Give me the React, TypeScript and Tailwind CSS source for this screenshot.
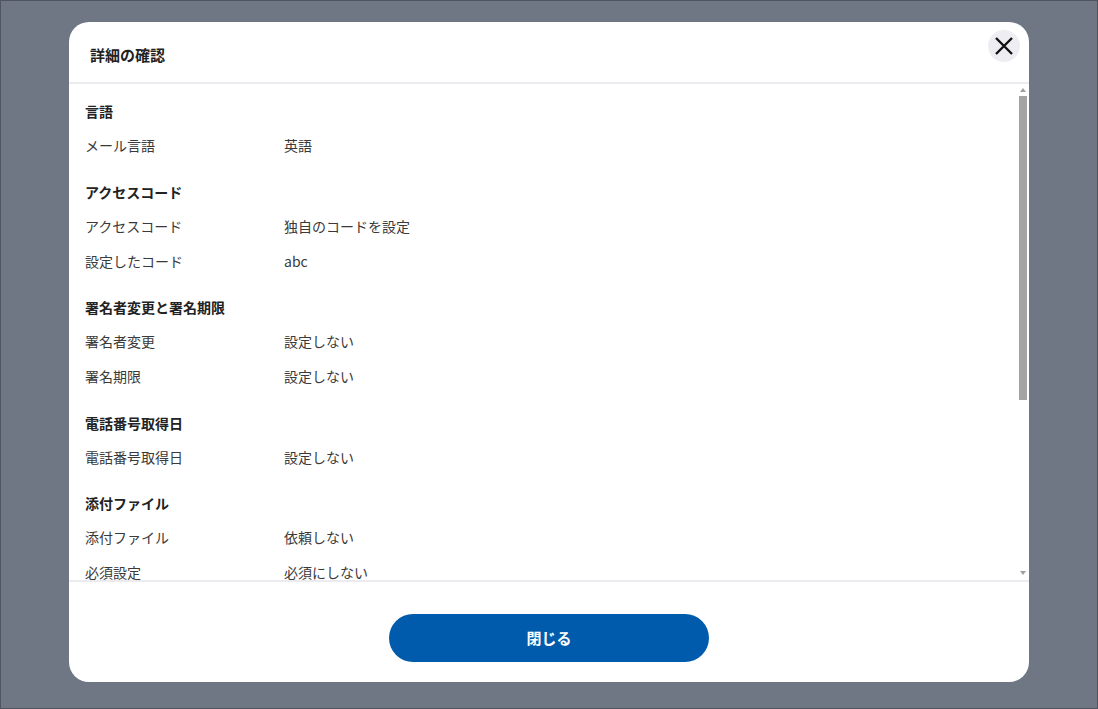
import React from "react";

type Row = { label: string; value: string };
type Section = { title: string; rows: Row[] };

const sections: Section[] = [
  { title: "言語", rows: [{ label: "メール言語", value: "英語" }] },
  {
    title: "アクセスコード",
    rows: [
      { label: "アクセスコード", value: "独自のコードを設定" },
      { label: "設定したコード", value: "abc" },
    ],
  },
  {
    title: "署名者変更と署名期限",
    rows: [
      { label: "署名者変更", value: "設定しない" },
      { label: "署名期限", value: "設定しない" },
    ],
  },
  { title: "電話番号取得日", rows: [{ label: "電話番号取得日", value: "設定しない" }] },
  {
    title: "添付ファイル",
    rows: [
      { label: "添付ファイル", value: "依頼しない" },
      { label: "必須設定", value: "必須にしない" },
    ],
  },
  {
    title: "リマインド",
    rows: [
      { label: "リマインド", value: "設定しない" },
      { label: "リマインド間隔", value: "設定しない" },
    ],
  },
  { title: "完了通知", rows: [{ label: "完了通知", value: "設定しない" }] },
];

const font = { fontFamily: '"Noto Sans CJK JP", "Noto Sans", sans-serif' };

// scrollbar drawn by hand, the screenshot browser hides native ones
const FakeScrollbar = () => (
  <div className="absolute top-0 right-[1px] w-[10px] h-full pointer-events-none">
    <svg className="absolute top-[4px] left-[2px]" width="6" height="4" viewBox="0 0 6 4">
      <path d="M0 4L3 0L6 4Z" fill="#a0a0a0" />
    </svg>
    <div className="absolute top-[12px] left-[1px] w-[8px] h-[304px] bg-[#a3a3a3]" />
    <svg className="absolute bottom-[5px] left-[2px]" width="6" height="4" viewBox="0 0 6 4">
      <path d="M0 0L6 0L3 4Z" fill="#a0a0a0" />
    </svg>
  </div>
);

export default function App() {
  return (
    <div
      className="h-[709px] w-full border border-[#4f5660] bg-[#6e7783] flex justify-center pt-[21px]"
      style={font}
    >
      <div className="relative w-[960px] h-[660px] bg-white rounded-[20px] flex flex-col overflow-hidden">
        <div className="h-[62px] shrink-0 border-b-2 border-[#ebebf0] pl-[21px] pt-[22px]">
          <h1 className="text-[15px] leading-[22px] font-bold text-[#222]">詳細の確認</h1>
        </div>
        <button className="absolute top-2 right-[9px] w-8 h-8 rounded-full bg-[#eeedf2] flex items-center justify-center">
          <svg width="20" height="20" viewBox="0 0 20 20" fill="none">
            <path d="M2 2L18 18M18 2L2 18" stroke="#111" strokeWidth="2.4" />
          </svg>
        </button>
        <div className="relative flex-1 min-h-0">
          <div className="h-full overflow-y-auto pl-4 pr-4 pt-[17px] pb-12 [scrollbar-width:none]">
            {sections.map((s, i) => (
              <div key={s.title} className={i === 0 ? "" : "mt-[25.5px]"}>
                <h2 className="text-[14px] leading-[21px] font-bold text-[#222]">{s.title}</h2>
                {s.rows.map((r, j) => (
                  <div
                    key={r.label}
                    className={`flex text-[14px] leading-[21px] text-[#3a3a3a] ${j === 0 ? "mt-[13px]" : "mt-[14px]"}`}
                  >
                    <span className="w-[199px] shrink-0">{r.label}</span>
                    <span>{r.value}</span>
                  </div>
                ))}
              </div>
            ))}
          </div>
          <FakeScrollbar />
        </div>
        <div className="shrink-0 border-t-2 border-[#ebebf0] pt-[32px] pb-5 flex justify-center">
          <button className="w-[320px] h-12 rounded-full bg-[#005bac] text-white text-[15px] font-bold">
            閉じる
          </button>
        </div>
      </div>
    </div>
  );
}
